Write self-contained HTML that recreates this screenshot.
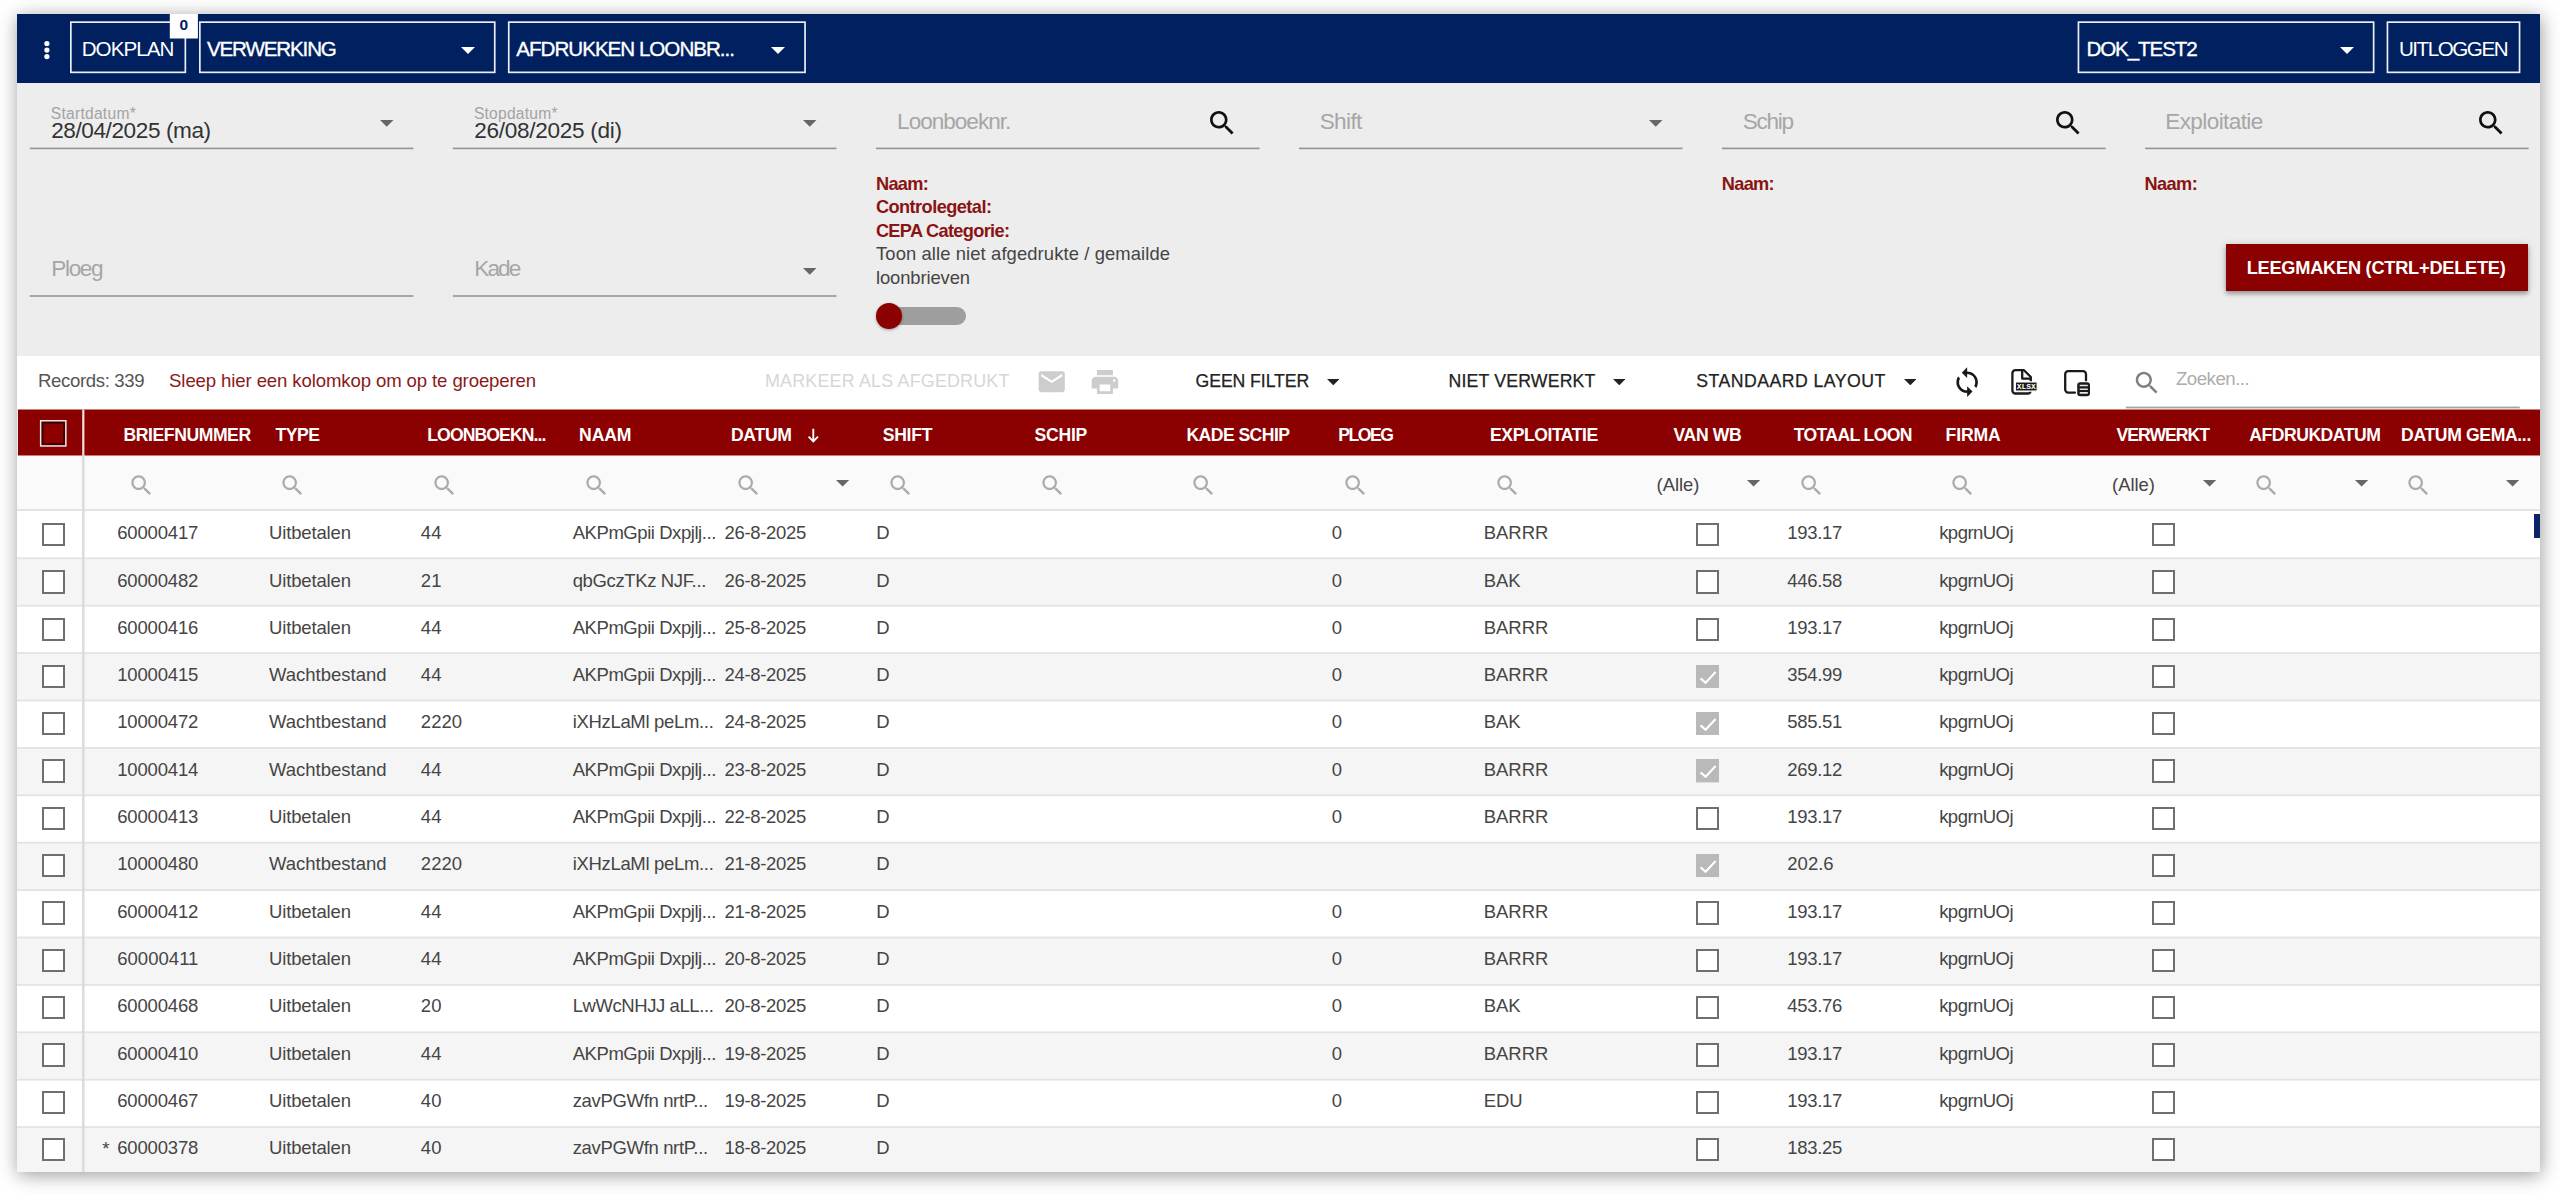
<!DOCTYPE html>
<html lang="nl"><head><meta charset="utf-8"><title>Afdrukken loonbrieven</title>
<style>
html,body{margin:0;padding:0}
body{width:2560px;height:1195px;background:#fff;overflow:hidden;position:relative;font-family:"Liberation Sans",sans-serif;}
#win{position:absolute;left:17px;top:14px;width:2523px;height:1158px;background:#fff;box-shadow:1px 3px 18px rgba(0,0,0,.40);}
#clip{position:absolute;left:0;top:0;width:2540px;height:1172px;overflow:hidden;}
#clip>div,#clip>svg,#clip>span{position:absolute;display:block}
#clip>span{white-space:nowrap;line-height:24px;}
</style></head><body>
<div id="win"></div>
<div id="clip">
<div style="left:17.00px;top:14.00px;width:2523.00px;height:69.00px;background:#00205f"></div>
<svg style="left:40px;top:36px" width="14" height="28" viewBox="0 0 14 28"><g fill="#fff"><circle cx="6.9" cy="7.5" r="2.6"/><circle cx="6.9" cy="14.1" r="2.6"/><circle cx="6.9" cy="20.6" r="2.6"/></g></svg>
<svg style="left:460.80px;top:46.60px" width="14.00" height="7.00" viewBox="0 0 10 5"><path fill="#fff" d="M0 0h10L5 5z"/></svg>
<svg style="left:770.80px;top:46.60px" width="14.00" height="7.00" viewBox="0 0 10 5"><path fill="#fff" d="M0 0h10L5 5z"/></svg>
<svg style="left:2340.00px;top:46.60px" width="14.00" height="7.00" viewBox="0 0 10 5"><path fill="#fff" d="M0 0h10L5 5z"/></svg>
<div style="left:17.00px;top:83.00px;width:2523.00px;height:272.60px;background:#ededed"></div>
<svg style="left:380.25px;top:120.40px" width="13.50" height="6.75" viewBox="0 0 10 5"><path fill="#666" d="M0 0h10L5 5z"/></svg>
<svg style="left:803.25px;top:120.40px" width="13.50" height="6.75" viewBox="0 0 10 5"><path fill="#666" d="M0 0h10L5 5z"/></svg>
<svg style="left:1205.60px;top:107.10px" width="32.30" height="32.30" viewBox="0 0 24 24"><path fill="#111" d="M15.5 14h-.79l-.28-.27C15.41 12.59 16 11.11 16 9.5 16 5.91 13.09 3 9.5 3S3 5.91 3 9.5 5.91 16 9.5 16c1.61 0 3.09-.59 4.23-1.57l.27.28v.79l5 4.99L20.49 19l-4.99-5zm-6 0C7.01 14 5 11.99 5 9.5S7.01 5 9.5 5 14 7.01 14 9.5 11.99 14 9.5 14z" /></svg>
<svg style="left:1649.45px;top:120.40px" width="13.50" height="6.75" viewBox="0 0 10 5"><path fill="#666" d="M0 0h10L5 5z"/></svg>
<svg style="left:2051.70px;top:107.10px" width="32.30" height="32.30" viewBox="0 0 24 24"><path fill="#111" d="M15.5 14h-.79l-.28-.27C15.41 12.59 16 11.11 16 9.5 16 5.91 13.09 3 9.5 3S3 5.91 3 9.5 5.91 16 9.5 16c1.61 0 3.09-.59 4.23-1.57l.27.28v.79l5 4.99L20.49 19l-4.99-5zm-6 0C7.01 14 5 11.99 5 9.5S7.01 5 9.5 5 14 7.01 14 9.5 11.99 14 9.5 14z" /></svg>
<svg style="left:2474.75px;top:107.10px" width="32.30" height="32.30" viewBox="0 0 24 24"><path fill="#111" d="M15.5 14h-.79l-.28-.27C15.41 12.59 16 11.11 16 9.5 16 5.91 13.09 3 9.5 3S3 5.91 3 9.5 5.91 16 9.5 16c1.61 0 3.09-.59 4.23-1.57l.27.28v.79l5 4.99L20.49 19l-4.99-5zm-6 0C7.01 14 5 11.99 5 9.5S7.01 5 9.5 5 14 7.01 14 9.5 11.99 14 9.5 14z" /></svg>
<svg style="left:803.25px;top:268.00px" width="13.50" height="6.75" viewBox="0 0 10 5"><path fill="#666" d="M0 0h10L5 5z"/></svg>
<div style="left:879.00px;top:307.20px;width:86.80px;height:17.70px;background:#9e9e9e;border-radius:9px"></div>
<div style="left:875.90px;top:302.80px;width:26.40px;height:26.40px;background:#8b0000;border-radius:50%;box-shadow:0 1px 3px rgba(0,0,0,.35)"></div>
<div style="left:2225.50px;top:243.70px;width:302.50px;height:47.30px;background:#8b0000;box-shadow:0 3px 4px rgba(0,0,0,.28),0 1px 8px rgba(0,0,0,.15)"></div>
<div style="left:17.00px;top:355.60px;width:2523.00px;height:100.00px;background:#fff"></div>
<svg style="left:1035.68px;top:366.36px" width="31.44" height="31.44" viewBox="0 0 24 24"><path fill="#cdcdcd" d="M20 4H4c-1.1 0-1.99.9-1.99 2L2 18c0 1.1.9 2 2 2h16c1.1 0 2-.9 2-2V6c0-1.1-.9-2-2-2zm0 4l-8 5-8-5V6l8 5 8-5v2z" /></svg>
<svg style="left:1089.24px;top:366.01px" width="31.92" height="31.92" viewBox="0 0 24 24"><path fill="#cdcdcd" d="M19 8H5c-1.66 0-3 1.34-3 3v6h4v4h12v-4h4v-6c0-1.66-1.34-3-3-3zm-3 11H8v-5h8v5zm3-7c-.55 0-1-.45-1-1s.45-1 1-1 1 .45 1 1-.45 1-1 1zm-1-9H6v4h12V3z" /></svg>
<svg style="left:1326.70px;top:379.20px" width="12.60" height="6.30" viewBox="0 0 10 5"><path fill="#222" d="M0 0h10L5 5z"/></svg>
<svg style="left:1612.90px;top:379.20px" width="12.60" height="6.30" viewBox="0 0 10 5"><path fill="#222" d="M0 0h10L5 5z"/></svg>
<svg style="left:1903.70px;top:379.20px" width="12.60" height="6.30" viewBox="0 0 10 5"><path fill="#222" d="M0 0h10L5 5z"/></svg>
<svg style="left:1951.35px;top:365.85px" width="32.30" height="32.30" viewBox="0 0 24 24"><path fill="#1a1a1a" d="M12 4V1L8 5l4 4V6c3.31 0 6 2.69 6 6 0 1.01-.25 1.97-.7 2.8l1.46 1.46C19.54 15.03 20 13.57 20 12c0-4.42-3.58-8-8-8zm0 14c-3.31 0-6-2.69-6-6 0-1.01.25-1.97.7-2.8L5.24 7.74C4.46 8.97 4 10.43 4 12c0 4.42 3.58 8 8 8v3l4-4-4-4v3z" /></svg>
<svg style="left:2010px;top:367px" width="30" height="30" viewBox="0 0 30 30"><g fill="none" stroke="#1a1a1a" stroke-width="2.3" stroke-linejoin="round"><path d="M5.4 3.2h8.6l6.8 6.8v13.5a3 3 0 0 1-3 3H5.4a3 3 0 0 1-3-3V6.2a3 3 0 0 1 3-3z"/><path d="M12.2 3.4v8.2h8.4"/></g><rect x="5.3" y="14.9" width="21.9" height="9.2" fill="#1a1a1a" stroke="#fff" stroke-width="1.3"/><text x="16.2" y="22.2" font-family="Liberation Mono, monospace" font-weight="700" font-size="7.6" fill="#fff" text-anchor="middle" textLength="19" lengthAdjust="spacingAndGlyphs">XLSX</text></svg>
<svg style="left:2062px;top:367px" width="30" height="31" viewBox="0 0 30 31"><path d="M24 13.3V7.2a3 3 0 0 0-3-3H6.2a3 3 0 0 0-3 3v15.4a3 3 0 0 0 3 3H13" fill="none" stroke="#1a1a1a" stroke-width="2.3" stroke-linecap="round"/><rect x="15.2" y="15.2" width="12.8" height="14.1" rx="3" fill="#1a1a1a"/><g stroke="#e6e6e6" stroke-width="1.6"><path d="M17.7 18.5h8.1M17.7 22.2h8.1M17.7 25.9h8.1"/></g></svg>
<svg style="left:2131.56px;top:368.46px" width="29.91" height="29.91" viewBox="0 0 24 24"><path fill="#808080" d="M15.5 14h-.79l-.28-.27C15.41 12.59 16 11.11 16 9.5 16 5.91 13.09 3 9.5 3S3 5.91 3 9.5 5.91 16 9.5 16c1.61 0 3.09-.59 4.23-1.57l.27.28v.79l5 4.99L20.49 19l-4.99-5zm-6 0C7.01 14 5 11.99 5 9.5S7.01 5 9.5 5 14 7.01 14 9.5 11.99 14 9.5 14z" /></svg>
<div style="left:17.00px;top:455.50px;width:2523.00px;height:54.50px;background:#fafafa"></div>
<svg style="left:127.53px;top:471.63px" width="26.95" height="26.95" viewBox="0 0 24 24"><path fill="#acacac" d="M15.5 14h-.79l-.28-.27C15.41 12.59 16 11.11 16 9.5 16 5.91 13.09 3 9.5 3S3 5.91 3 9.5 5.91 16 9.5 16c1.61 0 3.09-.59 4.23-1.57l.27.28v.79l5 4.99L20.49 19l-4.99-5zm-6 0C7.01 14 5 11.99 5 9.5S7.01 5 9.5 5 14 7.01 14 9.5 11.99 14 9.5 14z" /></svg>
<svg style="left:279.36px;top:471.63px" width="26.95" height="26.95" viewBox="0 0 24 24"><path fill="#acacac" d="M15.5 14h-.79l-.28-.27C15.41 12.59 16 11.11 16 9.5 16 5.91 13.09 3 9.5 3S3 5.91 3 9.5 5.91 16 9.5 16c1.61 0 3.09-.59 4.23-1.57l.27.28v.79l5 4.99L20.49 19l-4.99-5zm-6 0C7.01 14 5 11.99 5 9.5S7.01 5 9.5 5 14 7.01 14 9.5 11.99 14 9.5 14z" /></svg>
<svg style="left:431.19px;top:471.63px" width="26.95" height="26.95" viewBox="0 0 24 24"><path fill="#acacac" d="M15.5 14h-.79l-.28-.27C15.41 12.59 16 11.11 16 9.5 16 5.91 13.09 3 9.5 3S3 5.91 3 9.5 5.91 16 9.5 16c1.61 0 3.09-.59 4.23-1.57l.27.28v.79l5 4.99L20.49 19l-4.99-5zm-6 0C7.01 14 5 11.99 5 9.5S7.01 5 9.5 5 14 7.01 14 9.5 11.99 14 9.5 14z" /></svg>
<svg style="left:583.02px;top:471.63px" width="26.95" height="26.95" viewBox="0 0 24 24"><path fill="#acacac" d="M15.5 14h-.79l-.28-.27C15.41 12.59 16 11.11 16 9.5 16 5.91 13.09 3 9.5 3S3 5.91 3 9.5 5.91 16 9.5 16c1.61 0 3.09-.59 4.23-1.57l.27.28v.79l5 4.99L20.49 19l-4.99-5zm-6 0C7.01 14 5 11.99 5 9.5S7.01 5 9.5 5 14 7.01 14 9.5 11.99 14 9.5 14z" /></svg>
<svg style="left:734.85px;top:471.63px" width="26.95" height="26.95" viewBox="0 0 24 24"><path fill="#acacac" d="M15.5 14h-.79l-.28-.27C15.41 12.59 16 11.11 16 9.5 16 5.91 13.09 3 9.5 3S3 5.91 3 9.5 5.91 16 9.5 16c1.61 0 3.09-.59 4.23-1.57l.27.28v.79l5 4.99L20.49 19l-4.99-5zm-6 0C7.01 14 5 11.99 5 9.5S7.01 5 9.5 5 14 7.01 14 9.5 11.99 14 9.5 14z" /></svg>
<svg style="left:886.68px;top:471.63px" width="26.95" height="26.95" viewBox="0 0 24 24"><path fill="#acacac" d="M15.5 14h-.79l-.28-.27C15.41 12.59 16 11.11 16 9.5 16 5.91 13.09 3 9.5 3S3 5.91 3 9.5 5.91 16 9.5 16c1.61 0 3.09-.59 4.23-1.57l.27.28v.79l5 4.99L20.49 19l-4.99-5zm-6 0C7.01 14 5 11.99 5 9.5S7.01 5 9.5 5 14 7.01 14 9.5 11.99 14 9.5 14z" /></svg>
<svg style="left:1038.51px;top:471.63px" width="26.95" height="26.95" viewBox="0 0 24 24"><path fill="#acacac" d="M15.5 14h-.79l-.28-.27C15.41 12.59 16 11.11 16 9.5 16 5.91 13.09 3 9.5 3S3 5.91 3 9.5 5.91 16 9.5 16c1.61 0 3.09-.59 4.23-1.57l.27.28v.79l5 4.99L20.49 19l-4.99-5zm-6 0C7.01 14 5 11.99 5 9.5S7.01 5 9.5 5 14 7.01 14 9.5 11.99 14 9.5 14z" /></svg>
<svg style="left:1190.34px;top:471.63px" width="26.95" height="26.95" viewBox="0 0 24 24"><path fill="#acacac" d="M15.5 14h-.79l-.28-.27C15.41 12.59 16 11.11 16 9.5 16 5.91 13.09 3 9.5 3S3 5.91 3 9.5 5.91 16 9.5 16c1.61 0 3.09-.59 4.23-1.57l.27.28v.79l5 4.99L20.49 19l-4.99-5zm-6 0C7.01 14 5 11.99 5 9.5S7.01 5 9.5 5 14 7.01 14 9.5 11.99 14 9.5 14z" /></svg>
<svg style="left:1342.17px;top:471.63px" width="26.95" height="26.95" viewBox="0 0 24 24"><path fill="#acacac" d="M15.5 14h-.79l-.28-.27C15.41 12.59 16 11.11 16 9.5 16 5.91 13.09 3 9.5 3S3 5.91 3 9.5 5.91 16 9.5 16c1.61 0 3.09-.59 4.23-1.57l.27.28v.79l5 4.99L20.49 19l-4.99-5zm-6 0C7.01 14 5 11.99 5 9.5S7.01 5 9.5 5 14 7.01 14 9.5 11.99 14 9.5 14z" /></svg>
<svg style="left:1494.00px;top:471.63px" width="26.95" height="26.95" viewBox="0 0 24 24"><path fill="#acacac" d="M15.5 14h-.79l-.28-.27C15.41 12.59 16 11.11 16 9.5 16 5.91 13.09 3 9.5 3S3 5.91 3 9.5 5.91 16 9.5 16c1.61 0 3.09-.59 4.23-1.57l.27.28v.79l5 4.99L20.49 19l-4.99-5zm-6 0C7.01 14 5 11.99 5 9.5S7.01 5 9.5 5 14 7.01 14 9.5 11.99 14 9.5 14z" /></svg>
<svg style="left:1797.66px;top:471.63px" width="26.95" height="26.95" viewBox="0 0 24 24"><path fill="#acacac" d="M15.5 14h-.79l-.28-.27C15.41 12.59 16 11.11 16 9.5 16 5.91 13.09 3 9.5 3S3 5.91 3 9.5 5.91 16 9.5 16c1.61 0 3.09-.59 4.23-1.57l.27.28v.79l5 4.99L20.49 19l-4.99-5zm-6 0C7.01 14 5 11.99 5 9.5S7.01 5 9.5 5 14 7.01 14 9.5 11.99 14 9.5 14z" /></svg>
<svg style="left:1949.49px;top:471.63px" width="26.95" height="26.95" viewBox="0 0 24 24"><path fill="#acacac" d="M15.5 14h-.79l-.28-.27C15.41 12.59 16 11.11 16 9.5 16 5.91 13.09 3 9.5 3S3 5.91 3 9.5 5.91 16 9.5 16c1.61 0 3.09-.59 4.23-1.57l.27.28v.79l5 4.99L20.49 19l-4.99-5zm-6 0C7.01 14 5 11.99 5 9.5S7.01 5 9.5 5 14 7.01 14 9.5 11.99 14 9.5 14z" /></svg>
<svg style="left:2253.15px;top:471.63px" width="26.95" height="26.95" viewBox="0 0 24 24"><path fill="#acacac" d="M15.5 14h-.79l-.28-.27C15.41 12.59 16 11.11 16 9.5 16 5.91 13.09 3 9.5 3S3 5.91 3 9.5 5.91 16 9.5 16c1.61 0 3.09-.59 4.23-1.57l.27.28v.79l5 4.99L20.49 19l-4.99-5zm-6 0C7.01 14 5 11.99 5 9.5S7.01 5 9.5 5 14 7.01 14 9.5 11.99 14 9.5 14z" /></svg>
<svg style="left:2404.98px;top:471.63px" width="26.95" height="26.95" viewBox="0 0 24 24"><path fill="#acacac" d="M15.5 14h-.79l-.28-.27C15.41 12.59 16 11.11 16 9.5 16 5.91 13.09 3 9.5 3S3 5.91 3 9.5 5.91 16 9.5 16c1.61 0 3.09-.59 4.23-1.57l.27.28v.79l5 4.99L20.49 19l-4.99-5zm-6 0C7.01 14 5 11.99 5 9.5S7.01 5 9.5 5 14 7.01 14 9.5 11.99 14 9.5 14z" /></svg>
<svg style="left:836.30px;top:480.20px" width="13.20" height="6.60" viewBox="0 0 10 5"><path fill="#666" d="M0 0h10L5 5z"/></svg>
<svg style="left:1747.40px;top:480.20px" width="13.20" height="6.60" viewBox="0 0 10 5"><path fill="#666" d="M0 0h10L5 5z"/></svg>
<svg style="left:2202.90px;top:480.20px" width="13.20" height="6.60" viewBox="0 0 10 5"><path fill="#666" d="M0 0h10L5 5z"/></svg>
<svg style="left:2354.60px;top:480.20px" width="13.20" height="6.60" viewBox="0 0 10 5"><path fill="#666" d="M0 0h10L5 5z"/></svg>
<svg style="left:2506.40px;top:480.20px" width="13.20" height="6.60" viewBox="0 0 10 5"><path fill="#666" d="M0 0h10L5 5z"/></svg>
<div style="left:17.00px;top:510.00px;width:2523.00px;height:48.30px;background:#fff"></div>
<div style="left:41.60px;top:522.90px;width:23.40px;height:23.40px;border:2.4px solid #6f6f6f;box-sizing:border-box;background:#fff"></div>
<div style="left:1695.80px;top:522.90px;width:23.40px;height:23.40px;border:2.4px solid #6f6f6f;box-sizing:border-box;background:#fff"></div>
<div style="left:2151.50px;top:522.90px;width:23.40px;height:23.40px;border:2.4px solid #6f6f6f;box-sizing:border-box;background:#fff"></div>
<div style="left:17.00px;top:558.30px;width:2523.00px;height:47.40px;background:#f5f5f5"></div>
<div style="left:41.60px;top:570.20px;width:23.40px;height:23.40px;border:2.4px solid #6f6f6f;box-sizing:border-box;background:#fff"></div>
<div style="left:1695.80px;top:570.20px;width:23.40px;height:23.40px;border:2.4px solid #6f6f6f;box-sizing:border-box;background:#fff"></div>
<div style="left:2151.50px;top:570.20px;width:23.40px;height:23.40px;border:2.4px solid #6f6f6f;box-sizing:border-box;background:#fff"></div>
<div style="left:17.00px;top:605.70px;width:2523.00px;height:47.40px;background:#fff"></div>
<div style="left:41.60px;top:617.50px;width:23.40px;height:23.40px;border:2.4px solid #6f6f6f;box-sizing:border-box;background:#fff"></div>
<div style="left:1695.80px;top:617.50px;width:23.40px;height:23.40px;border:2.4px solid #6f6f6f;box-sizing:border-box;background:#fff"></div>
<div style="left:2151.50px;top:617.50px;width:23.40px;height:23.40px;border:2.4px solid #6f6f6f;box-sizing:border-box;background:#fff"></div>
<div style="left:17.00px;top:653.10px;width:2523.00px;height:47.40px;background:#f5f5f5"></div>
<div style="left:41.60px;top:664.80px;width:23.40px;height:23.40px;border:2.4px solid #6f6f6f;box-sizing:border-box;background:#fff"></div>
<svg style="left:1695.80px;top:664.80px" width="23.4" height="23.4" viewBox="0 0 23.4 23.4"><rect width="23.4" height="23.4" fill="#b9b9b9"/><path d="M4.6 13.4l5 4.3L19.6 7" fill="none" stroke="#fff" stroke-width="2.1"/></svg>
<div style="left:2151.50px;top:664.80px;width:23.40px;height:23.40px;border:2.4px solid #6f6f6f;box-sizing:border-box;background:#fff"></div>
<div style="left:17.00px;top:700.50px;width:2523.00px;height:47.40px;background:#fff"></div>
<div style="left:41.60px;top:712.10px;width:23.40px;height:23.40px;border:2.4px solid #6f6f6f;box-sizing:border-box;background:#fff"></div>
<svg style="left:1695.80px;top:712.10px" width="23.4" height="23.4" viewBox="0 0 23.4 23.4"><rect width="23.4" height="23.4" fill="#b9b9b9"/><path d="M4.6 13.4l5 4.3L19.6 7" fill="none" stroke="#fff" stroke-width="2.1"/></svg>
<div style="left:2151.50px;top:712.10px;width:23.40px;height:23.40px;border:2.4px solid #6f6f6f;box-sizing:border-box;background:#fff"></div>
<div style="left:17.00px;top:747.90px;width:2523.00px;height:47.40px;background:#f5f5f5"></div>
<div style="left:41.60px;top:759.40px;width:23.40px;height:23.40px;border:2.4px solid #6f6f6f;box-sizing:border-box;background:#fff"></div>
<svg style="left:1695.80px;top:759.40px" width="23.4" height="23.4" viewBox="0 0 23.4 23.4"><rect width="23.4" height="23.4" fill="#b9b9b9"/><path d="M4.6 13.4l5 4.3L19.6 7" fill="none" stroke="#fff" stroke-width="2.1"/></svg>
<div style="left:2151.50px;top:759.40px;width:23.40px;height:23.40px;border:2.4px solid #6f6f6f;box-sizing:border-box;background:#fff"></div>
<div style="left:17.00px;top:795.30px;width:2523.00px;height:47.40px;background:#fff"></div>
<div style="left:41.60px;top:806.70px;width:23.40px;height:23.40px;border:2.4px solid #6f6f6f;box-sizing:border-box;background:#fff"></div>
<div style="left:1695.80px;top:806.70px;width:23.40px;height:23.40px;border:2.4px solid #6f6f6f;box-sizing:border-box;background:#fff"></div>
<div style="left:2151.50px;top:806.70px;width:23.40px;height:23.40px;border:2.4px solid #6f6f6f;box-sizing:border-box;background:#fff"></div>
<div style="left:17.00px;top:842.70px;width:2523.00px;height:47.40px;background:#f5f5f5"></div>
<div style="left:41.60px;top:854.00px;width:23.40px;height:23.40px;border:2.4px solid #6f6f6f;box-sizing:border-box;background:#fff"></div>
<svg style="left:1695.80px;top:854.00px" width="23.4" height="23.4" viewBox="0 0 23.4 23.4"><rect width="23.4" height="23.4" fill="#b9b9b9"/><path d="M4.6 13.4l5 4.3L19.6 7" fill="none" stroke="#fff" stroke-width="2.1"/></svg>
<div style="left:2151.50px;top:854.00px;width:23.40px;height:23.40px;border:2.4px solid #6f6f6f;box-sizing:border-box;background:#fff"></div>
<div style="left:17.00px;top:890.10px;width:2523.00px;height:47.40px;background:#fff"></div>
<div style="left:41.60px;top:901.30px;width:23.40px;height:23.40px;border:2.4px solid #6f6f6f;box-sizing:border-box;background:#fff"></div>
<div style="left:1695.80px;top:901.30px;width:23.40px;height:23.40px;border:2.4px solid #6f6f6f;box-sizing:border-box;background:#fff"></div>
<div style="left:2151.50px;top:901.30px;width:23.40px;height:23.40px;border:2.4px solid #6f6f6f;box-sizing:border-box;background:#fff"></div>
<div style="left:17.00px;top:937.50px;width:2523.00px;height:47.40px;background:#f5f5f5"></div>
<div style="left:41.60px;top:948.60px;width:23.40px;height:23.40px;border:2.4px solid #6f6f6f;box-sizing:border-box;background:#fff"></div>
<div style="left:1695.80px;top:948.60px;width:23.40px;height:23.40px;border:2.4px solid #6f6f6f;box-sizing:border-box;background:#fff"></div>
<div style="left:2151.50px;top:948.60px;width:23.40px;height:23.40px;border:2.4px solid #6f6f6f;box-sizing:border-box;background:#fff"></div>
<div style="left:17.00px;top:984.90px;width:2523.00px;height:47.40px;background:#fff"></div>
<div style="left:41.60px;top:995.90px;width:23.40px;height:23.40px;border:2.4px solid #6f6f6f;box-sizing:border-box;background:#fff"></div>
<div style="left:1695.80px;top:995.90px;width:23.40px;height:23.40px;border:2.4px solid #6f6f6f;box-sizing:border-box;background:#fff"></div>
<div style="left:2151.50px;top:995.90px;width:23.40px;height:23.40px;border:2.4px solid #6f6f6f;box-sizing:border-box;background:#fff"></div>
<div style="left:17.00px;top:1032.30px;width:2523.00px;height:47.40px;background:#f5f5f5"></div>
<div style="left:41.60px;top:1043.20px;width:23.40px;height:23.40px;border:2.4px solid #6f6f6f;box-sizing:border-box;background:#fff"></div>
<div style="left:1695.80px;top:1043.20px;width:23.40px;height:23.40px;border:2.4px solid #6f6f6f;box-sizing:border-box;background:#fff"></div>
<div style="left:2151.50px;top:1043.20px;width:23.40px;height:23.40px;border:2.4px solid #6f6f6f;box-sizing:border-box;background:#fff"></div>
<div style="left:17.00px;top:1079.70px;width:2523.00px;height:47.40px;background:#fff"></div>
<div style="left:41.60px;top:1090.50px;width:23.40px;height:23.40px;border:2.4px solid #6f6f6f;box-sizing:border-box;background:#fff"></div>
<div style="left:1695.80px;top:1090.50px;width:23.40px;height:23.40px;border:2.4px solid #6f6f6f;box-sizing:border-box;background:#fff"></div>
<div style="left:2151.50px;top:1090.50px;width:23.40px;height:23.40px;border:2.4px solid #6f6f6f;box-sizing:border-box;background:#fff"></div>
<div style="left:17.00px;top:1127.10px;width:2523.00px;height:47.40px;background:#f5f5f5"></div>
<div style="left:41.60px;top:1137.80px;width:23.40px;height:23.40px;border:2.4px solid #6f6f6f;box-sizing:border-box;background:#fff"></div>
<div style="left:1695.80px;top:1137.80px;width:23.40px;height:23.40px;border:2.4px solid #6f6f6f;box-sizing:border-box;background:#fff"></div>
<div style="left:2151.50px;top:1137.80px;width:23.40px;height:23.40px;border:2.4px solid #6f6f6f;box-sizing:border-box;background:#fff"></div>
<div style="left:2534.30px;top:513.60px;width:5.70px;height:24.70px;background:#0a2464"></div>
<svg style="left:0;top:0" width="2540" height="1172" viewBox="0 0 2540 1172"><rect x="17.9" y="409.5" width="2522.1" height="46" fill="#8b0000"/><rect x="70.85" y="22.15" width="114.50" height="50.20" fill="none" stroke="rgba(255,255,255,.92)" stroke-width="1.7"/><rect x="169.8" y="14" width="28.1" height="24.5" fill="#fff"/><rect x="199.85" y="22.15" width="294.90" height="50.20" fill="none" stroke="rgba(255,255,255,.92)" stroke-width="1.7"/><rect x="508.75" y="22.15" width="296.30" height="50.20" fill="none" stroke="rgba(255,255,255,.92)" stroke-width="1.7"/><rect x="2078.45" y="22.15" width="295.20" height="50.20" fill="none" stroke="rgba(255,255,255,.92)" stroke-width="1.7"/><rect x="2387.45" y="22.15" width="132.10" height="50.20" fill="none" stroke="rgba(255,255,255,.92)" stroke-width="1.7"/><rect x="29.80" y="147.60" width="383.60" height="1.60" fill="#939393"/><rect x="452.85" y="147.60" width="383.60" height="1.60" fill="#939393"/><rect x="875.90" y="147.60" width="383.60" height="1.60" fill="#939393"/><rect x="1298.95" y="147.60" width="383.60" height="1.60" fill="#939393"/><rect x="1722.00" y="147.60" width="383.60" height="1.60" fill="#939393"/><rect x="2145.05" y="147.60" width="383.60" height="1.60" fill="#939393"/><rect x="29.80" y="295.20" width="383.60" height="1.60" fill="#939393"/><rect x="452.85" y="295.20" width="383.60" height="1.60" fill="#939393"/><rect x="2125.90" y="406.60" width="393.90" height="1.80" fill="#a4a4a4"/><rect x="82.20" y="409.50" width="2.20" height="46.00" fill="#efe3e3"/><rect x="39.9" y="420" width="26.7" height="26.7" fill="#f4eaea"/><rect x="41.4" y="421.5" width="23.7" height="23.7" fill="#3a0000"/><rect x="43.4" y="423.5" width="19.7" height="19.7" fill="#8e0000"/><path transform="translate(806 427)" d="M7.3 1.8v12M2.6 9.6l4.7 4.7 4.7-4.7" fill="none" stroke="#fff" stroke-width="1.9"/><rect x="17.00" y="557.40" width="2523.00" height="1.80" fill="#e3e3e3"/><rect x="17.00" y="604.80" width="2523.00" height="1.80" fill="#e3e3e3"/><rect x="17.00" y="652.20" width="2523.00" height="1.80" fill="#e3e3e3"/><rect x="17.00" y="699.60" width="2523.00" height="1.80" fill="#e3e3e3"/><rect x="17.00" y="747.00" width="2523.00" height="1.80" fill="#e3e3e3"/><rect x="17.00" y="794.40" width="2523.00" height="1.80" fill="#e3e3e3"/><rect x="17.00" y="841.80" width="2523.00" height="1.80" fill="#e3e3e3"/><rect x="17.00" y="889.20" width="2523.00" height="1.80" fill="#e3e3e3"/><rect x="17.00" y="936.60" width="2523.00" height="1.80" fill="#e3e3e3"/><rect x="17.00" y="984.00" width="2523.00" height="1.80" fill="#e3e3e3"/><rect x="17.00" y="1031.40" width="2523.00" height="1.80" fill="#e3e3e3"/><rect x="17.00" y="1078.80" width="2523.00" height="1.80" fill="#e3e3e3"/><rect x="17.00" y="1126.20" width="2523.00" height="1.80" fill="#e3e3e3"/><rect x="17.00" y="1173.60" width="2523.00" height="1.80" fill="#e3e3e3"/><rect x="17.00" y="509.10" width="2523.00" height="1.80" fill="#e1e1e1"/><rect x="82.00" y="455.40" width="2.60" height="720.00" fill="#dcdcdc"/></svg>
<span id="t0" style="top:12.93px;font-size:15.5px;color:#00205f;font-weight:700;left:83.90px;width:200px;text-align:center;">0</span>
<span id="t1" style="top:36.86px;font-size:20.6px;color:#fff;letter-spacing:-0.940px;left:81.70px;">DOKPLAN</span>
<span id="t2" style="top:37.06px;font-size:20.6px;color:#fff;letter-spacing:-1.153px;left:206.90px;-webkit-text-stroke:.35px #fff;">VERWERKING</span>
<span id="t3" style="top:37.06px;font-size:20.6px;color:#fff;letter-spacing:-1.007px;left:516.25px;-webkit-text-stroke:.35px #fff;">AFDRUKKEN LOONBR...</span>
<span id="t4" style="top:37.06px;font-size:20.6px;color:#fff;letter-spacing:-1.109px;left:2086.40px;-webkit-text-stroke:.35px #fff;">DOK_TEST2</span>
<span id="t5" style="top:36.86px;font-size:20.6px;color:#fff;letter-spacing:-1.450px;left:2398.90px;">UITLOGGEN</span>
<span id="t6" style="top:101.89px;font-size:15.6px;color:#a3a3a3;letter-spacing:0.256px;left:50.80px;">Startdatum*</span>
<span id="t7" style="top:119.37px;font-size:22.6px;color:#333;letter-spacing:-0.421px;left:51.20px;">28/04/2025 (ma)</span>
<span id="t8" style="top:101.89px;font-size:15.6px;color:#a3a3a3;letter-spacing:0.244px;left:473.90px;">Stopdatum*</span>
<span id="t9" style="top:119.37px;font-size:22.6px;color:#333;letter-spacing:-0.300px;left:474.20px;">26/08/2025 (di)</span>
<span id="t10" style="top:109.77px;font-size:22.6px;color:#a6a6a6;letter-spacing:-1.019px;left:897.10px;">Loonboeknr.</span>
<span id="t11" style="top:109.77px;font-size:22.6px;color:#a6a6a6;letter-spacing:-0.655px;left:1319.70px;">Shift</span>
<span id="t12" style="top:109.77px;font-size:22.6px;color:#a6a6a6;letter-spacing:-1.308px;left:1742.70px;">Schip</span>
<span id="t13" style="top:109.77px;font-size:22.6px;color:#a6a6a6;letter-spacing:-0.615px;left:2165.20px;">Exploitatie</span>
<span id="t14" style="top:256.97px;font-size:22.6px;color:#a6a6a6;letter-spacing:-1.324px;left:51.20px;">Ploeg</span>
<span id="t15" style="top:256.97px;font-size:22.6px;color:#a6a6a6;letter-spacing:-1.927px;left:474.30px;">Kade</span>
<span id="t16" style="top:171.69px;font-size:18.2px;color:#8a1414;font-weight:700;letter-spacing:-0.648px;left:875.90px;">Naam:</span>
<span id="t17" style="top:195.19px;font-size:18.2px;color:#8a1414;font-weight:700;letter-spacing:-0.552px;left:875.90px;">Controlegetal:</span>
<span id="t18" style="top:218.69px;font-size:18.2px;color:#8a1414;font-weight:700;letter-spacing:-0.673px;left:875.90px;">CEPA Categorie:</span>
<span id="t19" style="top:242.12px;font-size:18.4px;color:#444;letter-spacing:0.104px;left:876.00px;">Toon alle niet afgedrukte / gemailde</span>
<span id="t20" style="top:265.82px;font-size:18.4px;color:#444;letter-spacing:-0.109px;left:876.00px;">loonbrieven</span>
<span id="t21" style="top:171.69px;font-size:18.2px;color:#8a1414;font-weight:700;letter-spacing:-0.698px;left:1721.80px;">Naam:</span>
<span id="t22" style="top:171.69px;font-size:18.2px;color:#8a1414;font-weight:700;letter-spacing:-0.548px;left:2144.40px;">Naam:</span>
<span id="t23" style="top:255.69px;font-size:18.2px;color:#fff;font-weight:700;letter-spacing:-0.233px;left:2246.70px;">LEEGMAKEN (CTRL+DELETE)</span>
<span id="t24" style="top:368.65px;font-size:18.6px;color:#555;letter-spacing:-0.372px;left:38.00px;">Records: 339</span>
<span id="t25" style="top:368.65px;font-size:18.6px;color:#8a1a1a;letter-spacing:-0.123px;left:169.10px;">Sleep hier een kolomkop om op te groeperen</span>
<span id="t26" style="top:369.10px;font-size:17.9px;color:#d6d6d6;letter-spacing:0.190px;left:765.00px;">MARKEER ALS AFGEDRUKT</span>
<span id="t27" style="top:369.47px;font-size:17.7px;color:#222;letter-spacing:-0.087px;left:1195.50px;-webkit-text-stroke:.25px #222;">GEEN FILTER</span>
<span id="t28" style="top:369.47px;font-size:17.7px;color:#222;letter-spacing:0.174px;left:1448.50px;-webkit-text-stroke:.25px #222;">NIET VERWERKT</span>
<span id="t29" style="top:369.47px;font-size:17.7px;color:#222;letter-spacing:0.450px;left:1696.30px;-webkit-text-stroke:.25px #222;">STANDAARD LAYOUT</span>
<span id="t30" style="top:367.32px;font-size:18.7px;color:#adadad;letter-spacing:-0.515px;left:2175.90px;">Zoeken...</span>
<span id="t31" style="top:423.00px;font-size:17.6px;color:#fff;font-weight:700;letter-spacing:-0.445px;left:123.60px;">BRIEFNUMMER</span>
<span id="t32" style="top:423.00px;font-size:17.6px;color:#fff;font-weight:700;letter-spacing:-0.494px;left:275.43px;">TYPE</span>
<span id="t33" style="top:423.00px;font-size:17.6px;color:#fff;font-weight:700;letter-spacing:-0.890px;left:427.26px;">LOONBOEKN...</span>
<span id="t34" style="top:423.00px;font-size:17.6px;color:#fff;font-weight:700;letter-spacing:-0.124px;left:579.09px;">NAAM</span>
<span id="t35" style="top:423.00px;font-size:17.6px;color:#fff;font-weight:700;letter-spacing:-0.285px;left:730.92px;">DATUM</span>
<span id="t36" style="top:423.00px;font-size:17.6px;color:#fff;font-weight:700;letter-spacing:-0.295px;left:882.75px;">SHIFT</span>
<span id="t37" style="top:423.00px;font-size:17.6px;color:#fff;font-weight:700;letter-spacing:-0.265px;left:1034.58px;">SCHIP</span>
<span id="t38" style="top:423.00px;font-size:17.6px;color:#fff;font-weight:700;letter-spacing:-0.547px;left:1186.41px;">KADE SCHIP</span>
<span id="t39" style="top:423.00px;font-size:17.6px;color:#fff;font-weight:700;letter-spacing:-1.458px;left:1338.24px;">PLOEG</span>
<span id="t40" style="top:423.00px;font-size:17.6px;color:#fff;font-weight:700;letter-spacing:-0.452px;left:1490.07px;">EXPLOITATIE</span>
<span id="t41" style="top:423.00px;font-size:17.6px;color:#fff;font-weight:700;letter-spacing:-0.349px;left:1673.50px;">VAN WB</span>
<span id="t42" style="top:423.00px;font-size:17.6px;color:#fff;font-weight:700;letter-spacing:-0.634px;left:1793.73px;">TOTAAL LOON</span>
<span id="t43" style="top:423.00px;font-size:17.6px;color:#fff;font-weight:700;letter-spacing:-0.116px;left:1945.56px;">FIRMA</span>
<span id="t44" style="top:423.00px;font-size:17.6px;color:#fff;font-weight:700;letter-spacing:-0.980px;left:2116.50px;">VERWERKT</span>
<span id="t45" style="top:423.00px;font-size:17.6px;color:#fff;font-weight:700;letter-spacing:-0.482px;left:2249.22px;">AFDRUKDATUM</span>
<span id="t46" style="top:423.00px;font-size:17.6px;color:#fff;font-weight:700;letter-spacing:-0.359px;left:2401.05px;">DATUM GEMA...</span>
<span id="t47" style="top:472.92px;font-size:18.4px;color:#444;letter-spacing:-0.024px;left:1656.60px;">(Alle)</span>
<span id="t48" style="top:472.92px;font-size:18.4px;color:#444;letter-spacing:-0.024px;left:2112.10px;">(Alle)</span>
<span id="t49" style="top:521.29px;font-size:18.5px;color:#454545;letter-spacing:-0.159px;left:117.20px;">60000417</span>
<span id="t50" style="top:521.29px;font-size:18.5px;color:#454545;letter-spacing:-0.146px;left:269.03px;">Uitbetalen</span>
<span id="t51" style="top:521.29px;font-size:18.5px;color:#454545;left:420.86px;">44</span>
<span id="t52" style="top:521.29px;font-size:18.5px;color:#454545;letter-spacing:-0.442px;left:572.69px;">AKPmGpii Dxpjlj...</span>
<span id="t53" style="top:521.29px;font-size:18.5px;color:#454545;letter-spacing:-0.318px;left:724.52px;">26-8-2025</span>
<span id="t54" style="top:521.29px;font-size:18.5px;color:#454545;left:876.35px;">D</span>
<span id="t55" style="top:521.29px;font-size:18.5px;color:#454545;left:1331.84px;">0</span>
<span id="t56" style="top:521.29px;font-size:18.5px;color:#454545;left:1483.67px;">BARRR</span>
<span id="t57" style="top:521.29px;font-size:18.5px;color:#454545;letter-spacing:-0.319px;left:1787.33px;">193.17</span>
<span id="t58" style="top:521.29px;font-size:18.5px;color:#454545;letter-spacing:-0.534px;left:1939.16px;">kpgrnUOj</span>
<span id="t59" style="top:568.59px;font-size:18.5px;color:#454545;letter-spacing:-0.159px;left:117.20px;">60000482</span>
<span id="t60" style="top:568.59px;font-size:18.5px;color:#454545;letter-spacing:-0.146px;left:269.03px;">Uitbetalen</span>
<span id="t61" style="top:568.59px;font-size:18.5px;color:#454545;left:420.86px;">21</span>
<span id="t62" style="top:568.59px;font-size:18.5px;color:#454545;letter-spacing:-0.369px;left:572.69px;">qbGczTKz NJF...</span>
<span id="t63" style="top:568.59px;font-size:18.5px;color:#454545;letter-spacing:-0.318px;left:724.52px;">26-8-2025</span>
<span id="t64" style="top:568.59px;font-size:18.5px;color:#454545;left:876.35px;">D</span>
<span id="t65" style="top:568.59px;font-size:18.5px;color:#454545;left:1331.84px;">0</span>
<span id="t66" style="top:568.59px;font-size:18.5px;color:#454545;left:1483.67px;">BAK</span>
<span id="t67" style="top:568.59px;font-size:18.5px;color:#454545;letter-spacing:-0.319px;left:1787.33px;">446.58</span>
<span id="t68" style="top:568.59px;font-size:18.5px;color:#454545;letter-spacing:-0.534px;left:1939.16px;">kpgrnUOj</span>
<span id="t69" style="top:615.89px;font-size:18.5px;color:#454545;letter-spacing:-0.159px;left:117.20px;">60000416</span>
<span id="t70" style="top:615.89px;font-size:18.5px;color:#454545;letter-spacing:-0.146px;left:269.03px;">Uitbetalen</span>
<span id="t71" style="top:615.89px;font-size:18.5px;color:#454545;left:420.86px;">44</span>
<span id="t72" style="top:615.89px;font-size:18.5px;color:#454545;letter-spacing:-0.442px;left:572.69px;">AKPmGpii Dxpjlj...</span>
<span id="t73" style="top:615.89px;font-size:18.5px;color:#454545;letter-spacing:-0.318px;left:724.52px;">25-8-2025</span>
<span id="t74" style="top:615.89px;font-size:18.5px;color:#454545;left:876.35px;">D</span>
<span id="t75" style="top:615.89px;font-size:18.5px;color:#454545;left:1331.84px;">0</span>
<span id="t76" style="top:615.89px;font-size:18.5px;color:#454545;left:1483.67px;">BARRR</span>
<span id="t77" style="top:615.89px;font-size:18.5px;color:#454545;letter-spacing:-0.319px;left:1787.33px;">193.17</span>
<span id="t78" style="top:615.89px;font-size:18.5px;color:#454545;letter-spacing:-0.534px;left:1939.16px;">kpgrnUOj</span>
<span id="t79" style="top:663.19px;font-size:18.5px;color:#454545;letter-spacing:-0.159px;left:117.20px;">10000415</span>
<span id="t80" style="top:663.19px;font-size:18.5px;color:#454545;letter-spacing:-0.007px;left:269.03px;">Wachtbestand</span>
<span id="t81" style="top:663.19px;font-size:18.5px;color:#454545;left:420.86px;">44</span>
<span id="t82" style="top:663.19px;font-size:18.5px;color:#454545;letter-spacing:-0.442px;left:572.69px;">AKPmGpii Dxpjlj...</span>
<span id="t83" style="top:663.19px;font-size:18.5px;color:#454545;letter-spacing:-0.318px;left:724.52px;">24-8-2025</span>
<span id="t84" style="top:663.19px;font-size:18.5px;color:#454545;left:876.35px;">D</span>
<span id="t85" style="top:663.19px;font-size:18.5px;color:#454545;left:1331.84px;">0</span>
<span id="t86" style="top:663.19px;font-size:18.5px;color:#454545;left:1483.67px;">BARRR</span>
<span id="t87" style="top:663.19px;font-size:18.5px;color:#454545;letter-spacing:-0.319px;left:1787.33px;">354.99</span>
<span id="t88" style="top:663.19px;font-size:18.5px;color:#454545;letter-spacing:-0.534px;left:1939.16px;">kpgrnUOj</span>
<span id="t89" style="top:710.49px;font-size:18.5px;color:#454545;letter-spacing:-0.159px;left:117.20px;">10000472</span>
<span id="t90" style="top:710.49px;font-size:18.5px;color:#454545;letter-spacing:-0.007px;left:269.03px;">Wachtbestand</span>
<span id="t91" style="top:710.49px;font-size:18.5px;color:#454545;left:420.86px;">2220</span>
<span id="t92" style="top:710.49px;font-size:18.5px;color:#454545;letter-spacing:-0.326px;left:572.69px;">iXHzLaMl peLm...</span>
<span id="t93" style="top:710.49px;font-size:18.5px;color:#454545;letter-spacing:-0.318px;left:724.52px;">24-8-2025</span>
<span id="t94" style="top:710.49px;font-size:18.5px;color:#454545;left:876.35px;">D</span>
<span id="t95" style="top:710.49px;font-size:18.5px;color:#454545;left:1331.84px;">0</span>
<span id="t96" style="top:710.49px;font-size:18.5px;color:#454545;left:1483.67px;">BAK</span>
<span id="t97" style="top:710.49px;font-size:18.5px;color:#454545;letter-spacing:-0.319px;left:1787.33px;">585.51</span>
<span id="t98" style="top:710.49px;font-size:18.5px;color:#454545;letter-spacing:-0.534px;left:1939.16px;">kpgrnUOj</span>
<span id="t99" style="top:757.79px;font-size:18.5px;color:#454545;letter-spacing:-0.159px;left:117.20px;">10000414</span>
<span id="t100" style="top:757.79px;font-size:18.5px;color:#454545;letter-spacing:-0.007px;left:269.03px;">Wachtbestand</span>
<span id="t101" style="top:757.79px;font-size:18.5px;color:#454545;left:420.86px;">44</span>
<span id="t102" style="top:757.79px;font-size:18.5px;color:#454545;letter-spacing:-0.442px;left:572.69px;">AKPmGpii Dxpjlj...</span>
<span id="t103" style="top:757.79px;font-size:18.5px;color:#454545;letter-spacing:-0.318px;left:724.52px;">23-8-2025</span>
<span id="t104" style="top:757.79px;font-size:18.5px;color:#454545;left:876.35px;">D</span>
<span id="t105" style="top:757.79px;font-size:18.5px;color:#454545;left:1331.84px;">0</span>
<span id="t106" style="top:757.79px;font-size:18.5px;color:#454545;left:1483.67px;">BARRR</span>
<span id="t107" style="top:757.79px;font-size:18.5px;color:#454545;letter-spacing:-0.319px;left:1787.33px;">269.12</span>
<span id="t108" style="top:757.79px;font-size:18.5px;color:#454545;letter-spacing:-0.534px;left:1939.16px;">kpgrnUOj</span>
<span id="t109" style="top:805.09px;font-size:18.5px;color:#454545;letter-spacing:-0.159px;left:117.20px;">60000413</span>
<span id="t110" style="top:805.09px;font-size:18.5px;color:#454545;letter-spacing:-0.146px;left:269.03px;">Uitbetalen</span>
<span id="t111" style="top:805.09px;font-size:18.5px;color:#454545;left:420.86px;">44</span>
<span id="t112" style="top:805.09px;font-size:18.5px;color:#454545;letter-spacing:-0.442px;left:572.69px;">AKPmGpii Dxpjlj...</span>
<span id="t113" style="top:805.09px;font-size:18.5px;color:#454545;letter-spacing:-0.318px;left:724.52px;">22-8-2025</span>
<span id="t114" style="top:805.09px;font-size:18.5px;color:#454545;left:876.35px;">D</span>
<span id="t115" style="top:805.09px;font-size:18.5px;color:#454545;left:1331.84px;">0</span>
<span id="t116" style="top:805.09px;font-size:18.5px;color:#454545;left:1483.67px;">BARRR</span>
<span id="t117" style="top:805.09px;font-size:18.5px;color:#454545;letter-spacing:-0.319px;left:1787.33px;">193.17</span>
<span id="t118" style="top:805.09px;font-size:18.5px;color:#454545;letter-spacing:-0.534px;left:1939.16px;">kpgrnUOj</span>
<span id="t119" style="top:852.39px;font-size:18.5px;color:#454545;letter-spacing:-0.159px;left:117.20px;">10000480</span>
<span id="t120" style="top:852.39px;font-size:18.5px;color:#454545;letter-spacing:-0.007px;left:269.03px;">Wachtbestand</span>
<span id="t121" style="top:852.39px;font-size:18.5px;color:#454545;left:420.86px;">2220</span>
<span id="t122" style="top:852.39px;font-size:18.5px;color:#454545;letter-spacing:-0.326px;left:572.69px;">iXHzLaMl peLm...</span>
<span id="t123" style="top:852.39px;font-size:18.5px;color:#454545;letter-spacing:-0.318px;left:724.52px;">21-8-2025</span>
<span id="t124" style="top:852.39px;font-size:18.5px;color:#454545;left:876.35px;">D</span>
<span id="t125" style="top:852.39px;font-size:18.5px;color:#454545;left:1787.33px;">202.6</span>
<span id="t126" style="top:899.69px;font-size:18.5px;color:#454545;letter-spacing:-0.159px;left:117.20px;">60000412</span>
<span id="t127" style="top:899.69px;font-size:18.5px;color:#454545;letter-spacing:-0.146px;left:269.03px;">Uitbetalen</span>
<span id="t128" style="top:899.69px;font-size:18.5px;color:#454545;left:420.86px;">44</span>
<span id="t129" style="top:899.69px;font-size:18.5px;color:#454545;letter-spacing:-0.442px;left:572.69px;">AKPmGpii Dxpjlj...</span>
<span id="t130" style="top:899.69px;font-size:18.5px;color:#454545;letter-spacing:-0.318px;left:724.52px;">21-8-2025</span>
<span id="t131" style="top:899.69px;font-size:18.5px;color:#454545;left:876.35px;">D</span>
<span id="t132" style="top:899.69px;font-size:18.5px;color:#454545;left:1331.84px;">0</span>
<span id="t133" style="top:899.69px;font-size:18.5px;color:#454545;left:1483.67px;">BARRR</span>
<span id="t134" style="top:899.69px;font-size:18.5px;color:#454545;letter-spacing:-0.319px;left:1787.33px;">193.17</span>
<span id="t135" style="top:899.69px;font-size:18.5px;color:#454545;letter-spacing:-0.534px;left:1939.16px;">kpgrnUOj</span>
<span id="t136" style="top:946.99px;font-size:18.5px;color:#454545;letter-spacing:0.038px;left:117.20px;">60000411</span>
<span id="t137" style="top:946.99px;font-size:18.5px;color:#454545;letter-spacing:-0.146px;left:269.03px;">Uitbetalen</span>
<span id="t138" style="top:946.99px;font-size:18.5px;color:#454545;left:420.86px;">44</span>
<span id="t139" style="top:946.99px;font-size:18.5px;color:#454545;letter-spacing:-0.442px;left:572.69px;">AKPmGpii Dxpjlj...</span>
<span id="t140" style="top:946.99px;font-size:18.5px;color:#454545;letter-spacing:-0.318px;left:724.52px;">20-8-2025</span>
<span id="t141" style="top:946.99px;font-size:18.5px;color:#454545;left:876.35px;">D</span>
<span id="t142" style="top:946.99px;font-size:18.5px;color:#454545;left:1331.84px;">0</span>
<span id="t143" style="top:946.99px;font-size:18.5px;color:#454545;left:1483.67px;">BARRR</span>
<span id="t144" style="top:946.99px;font-size:18.5px;color:#454545;letter-spacing:-0.319px;left:1787.33px;">193.17</span>
<span id="t145" style="top:946.99px;font-size:18.5px;color:#454545;letter-spacing:-0.534px;left:1939.16px;">kpgrnUOj</span>
<span id="t146" style="top:994.29px;font-size:18.5px;color:#454545;letter-spacing:-0.159px;left:117.20px;">60000468</span>
<span id="t147" style="top:994.29px;font-size:18.5px;color:#454545;letter-spacing:-0.146px;left:269.03px;">Uitbetalen</span>
<span id="t148" style="top:994.29px;font-size:18.5px;color:#454545;left:420.86px;">20</span>
<span id="t149" style="top:994.29px;font-size:18.5px;color:#454545;letter-spacing:-0.422px;left:572.69px;">LwWcNHJJ aLL...</span>
<span id="t150" style="top:994.29px;font-size:18.5px;color:#454545;letter-spacing:-0.318px;left:724.52px;">20-8-2025</span>
<span id="t151" style="top:994.29px;font-size:18.5px;color:#454545;left:876.35px;">D</span>
<span id="t152" style="top:994.29px;font-size:18.5px;color:#454545;left:1331.84px;">0</span>
<span id="t153" style="top:994.29px;font-size:18.5px;color:#454545;left:1483.67px;">BAK</span>
<span id="t154" style="top:994.29px;font-size:18.5px;color:#454545;letter-spacing:-0.319px;left:1787.33px;">453.76</span>
<span id="t155" style="top:994.29px;font-size:18.5px;color:#454545;letter-spacing:-0.534px;left:1939.16px;">kpgrnUOj</span>
<span id="t156" style="top:1041.59px;font-size:18.5px;color:#454545;letter-spacing:-0.159px;left:117.20px;">60000410</span>
<span id="t157" style="top:1041.59px;font-size:18.5px;color:#454545;letter-spacing:-0.146px;left:269.03px;">Uitbetalen</span>
<span id="t158" style="top:1041.59px;font-size:18.5px;color:#454545;left:420.86px;">44</span>
<span id="t159" style="top:1041.59px;font-size:18.5px;color:#454545;letter-spacing:-0.442px;left:572.69px;">AKPmGpii Dxpjlj...</span>
<span id="t160" style="top:1041.59px;font-size:18.5px;color:#454545;letter-spacing:-0.318px;left:724.52px;">19-8-2025</span>
<span id="t161" style="top:1041.59px;font-size:18.5px;color:#454545;left:876.35px;">D</span>
<span id="t162" style="top:1041.59px;font-size:18.5px;color:#454545;left:1331.84px;">0</span>
<span id="t163" style="top:1041.59px;font-size:18.5px;color:#454545;left:1483.67px;">BARRR</span>
<span id="t164" style="top:1041.59px;font-size:18.5px;color:#454545;letter-spacing:-0.319px;left:1787.33px;">193.17</span>
<span id="t165" style="top:1041.59px;font-size:18.5px;color:#454545;letter-spacing:-0.534px;left:1939.16px;">kpgrnUOj</span>
<span id="t166" style="top:1088.89px;font-size:18.5px;color:#454545;letter-spacing:-0.159px;left:117.20px;">60000467</span>
<span id="t167" style="top:1088.89px;font-size:18.5px;color:#454545;letter-spacing:-0.146px;left:269.03px;">Uitbetalen</span>
<span id="t168" style="top:1088.89px;font-size:18.5px;color:#454545;left:420.86px;">40</span>
<span id="t169" style="top:1088.89px;font-size:18.5px;color:#454545;letter-spacing:-0.340px;left:572.69px;">zavPGWfn nrtP...</span>
<span id="t170" style="top:1088.89px;font-size:18.5px;color:#454545;letter-spacing:-0.318px;left:724.52px;">19-8-2025</span>
<span id="t171" style="top:1088.89px;font-size:18.5px;color:#454545;left:876.35px;">D</span>
<span id="t172" style="top:1088.89px;font-size:18.5px;color:#454545;left:1331.84px;">0</span>
<span id="t173" style="top:1088.89px;font-size:18.5px;color:#454545;left:1483.67px;">EDU</span>
<span id="t174" style="top:1088.89px;font-size:18.5px;color:#454545;letter-spacing:-0.319px;left:1787.33px;">193.17</span>
<span id="t175" style="top:1088.89px;font-size:18.5px;color:#454545;letter-spacing:-0.534px;left:1939.16px;">kpgrnUOj</span>
<span id="t176" style="top:1136.19px;font-size:18.5px;color:#454545;letter-spacing:-0.159px;left:117.20px;">60000378</span>
<span id="t177" style="top:1137.19px;font-size:18.5px;color:#454545;left:102.20px;">*</span>
<span id="t178" style="top:1136.19px;font-size:18.5px;color:#454545;letter-spacing:-0.146px;left:269.03px;">Uitbetalen</span>
<span id="t179" style="top:1136.19px;font-size:18.5px;color:#454545;left:420.86px;">40</span>
<span id="t180" style="top:1136.19px;font-size:18.5px;color:#454545;letter-spacing:-0.340px;left:572.69px;">zavPGWfn nrtP...</span>
<span id="t181" style="top:1136.19px;font-size:18.5px;color:#454545;letter-spacing:-0.318px;left:724.52px;">18-8-2025</span>
<span id="t182" style="top:1136.19px;font-size:18.5px;color:#454545;left:876.35px;">D</span>
<span id="t183" style="top:1136.19px;font-size:18.5px;color:#454545;letter-spacing:-0.319px;left:1787.33px;">183.25</span>
</div>
</body></html>
